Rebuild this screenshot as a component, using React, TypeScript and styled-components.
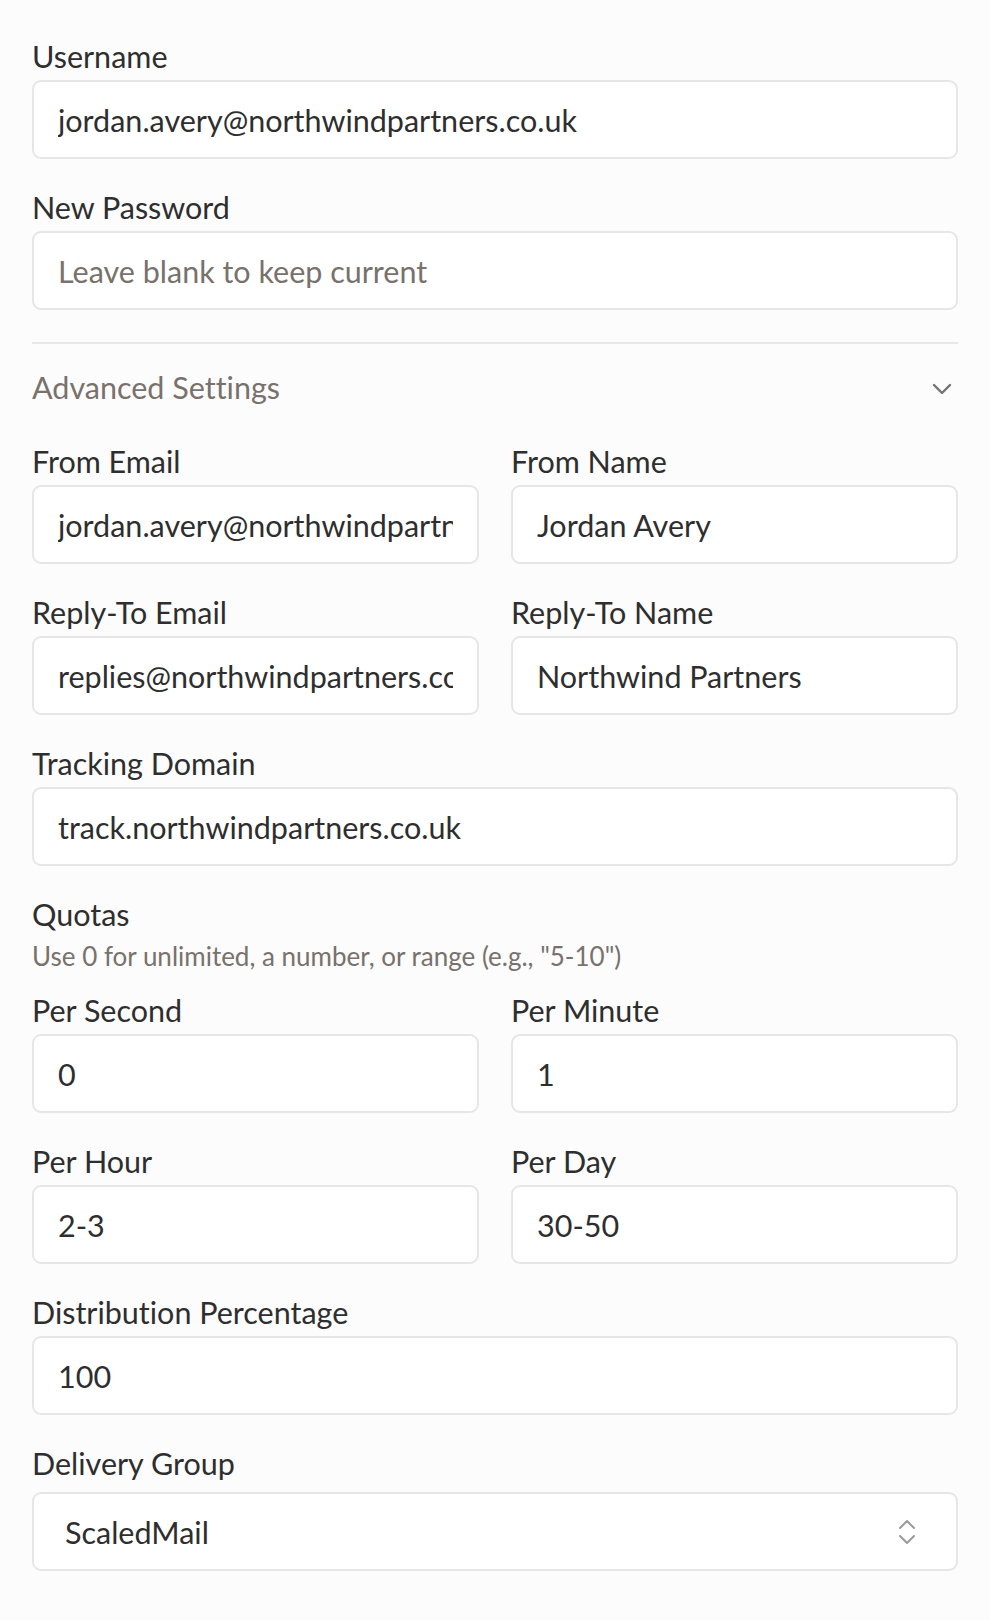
import React from 'react';
import styled, { createGlobalStyle } from 'styled-components';

const GlobalStyle = createGlobalStyle`
  html, body {
    margin: 0;
    padding: 0;
    background: #fcfcfc;
  }
  body {
    font-family: Lato, "Noto Sans", sans-serif;
    font-variant-ligatures: no-common-ligatures;
    color: #2e2e2e;
  }
  * { box-sizing: border-box; }
`;

const Form = styled.form`
  width: 990px;
  padding: 39px 32px 40px 32px;
  display: flex;
  flex-direction: column;
`;

const Field = styled.div`
  display: flex;
  flex-direction: column;
  margin-bottom: 31px;
`;

const Label = styled.label<{ $space?: number }>`
  font-size: 30.5px;
  line-height: 34px;
  color: #2e2e2e;
  margin-bottom: ${p => (p.$space ?? 7)}px;
`;

const Input = styled.input`
  width: 100%;
  height: 79px;
  padding: 0 24px;
  border: 2px solid #e6e6e6;
  border-radius: 9px;
  background: #fff;
  font-family: Lato, "Noto Sans", sans-serif;
  font-variant-ligatures: no-common-ligatures;
  font-size: 30.5px;
  color: #2e2e2e;
  outline: none;
  &::placeholder {
    color: #78716c;
  }
`;

const Divider = styled.hr`
  border: none;
  height: 2px;
  background: #e8e8e8;
  margin: 1px 0 0 0;
`;

const SectionHeader = styled.button`
  display: flex;
  align-items: center;
  justify-content: space-between;
  background: none;
  border: none;
  padding: 26px 6px 40px 0;
  font-family: Lato, "Noto Sans", sans-serif;
  font-variant-ligatures: no-common-ligatures;
  font-size: 30.5px;
  line-height: 34px;
  color: #78716c;
  cursor: pointer;
  text-align: left;
`;

const Row = styled.div`
  display: grid;
  grid-template-columns: 1fr 1fr;
  column-gap: 32px;
`;

const GroupTitle = styled.div`
  font-size: 30.5px;
  line-height: 34px;
  color: #2e2e2e;
`;

const Helper = styled.div`
  font-size: 26px;
  line-height: 30px;
  color: #78716c;
  margin: 10px 0 22px 0;
`;

const SelectBox = styled.div`
  position: relative;
  width: 100%;
  height: 79px;
  border: 2px solid #e6e6e6;
  border-radius: 9px;
  background: #fff;
`;

const Select = styled.select`
  appearance: none;
  width: 100%;
  height: 100%;
  border: none;
  background: transparent;
  padding: 0 60px 0 31px;
  font-family: Lato, "Noto Sans", sans-serif;
  font-size: 30.5px;
  color: #2e2e2e;
  outline: none;
`;

const SelectArrows = styled.span`
  position: absolute;
  right: 40px;
  top: 50%;
  transform: translateY(-50%);
  display: flex;
  pointer-events: none;
  color: #9a9a9a;
`;

const ChevronDown = () => (
  <svg width="20" height="12" viewBox="0 0 20 12" fill="none" stroke="currentColor" strokeWidth="2.4" strokeLinecap="round" strokeLinejoin="round" style={{ marginTop: 4 }}>
    <path d="M2 2 L10 10 L18 2" />
  </svg>
);

const UpDown = () => (
  <svg width="18" height="26" viewBox="0 0 18 26" fill="none" stroke="currentColor" strokeWidth="2" strokeLinecap="round" strokeLinejoin="round">
    <path d="M2 9 L9 2 L16 9" />
    <path d="M2 17 L9 24 L16 17" />
  </svg>
);

export default function App() {
  return (
    <>
      <GlobalStyle />
      <Form onSubmit={e => e.preventDefault()}>
        <Field>
          <Label>Username</Label>
          <Input defaultValue="jordan.avery@northwindpartners.co.uk" />
        </Field>
        <Field>
          <Label>New Password</Label>
          <Input type="password" placeholder="Leave blank to keep current" />
        </Field>

        <Divider />
        <SectionHeader type="button">
          Advanced Settings
          <ChevronDown />
        </SectionHeader>

        <Row>
          <Field>
            <Label>From Email</Label>
            <Input defaultValue="jordan.avery@northwindpartners.co.uk" />
          </Field>
          <Field>
            <Label>From Name</Label>
            <Input defaultValue="Jordan Avery" />
          </Field>
        </Row>
        <Row>
          <Field>
            <Label>Reply-To Email</Label>
            <Input defaultValue="replies@northwindpartners.co.uk" />
          </Field>
          <Field>
            <Label>Reply-To Name</Label>
            <Input defaultValue="Northwind Partners" />
          </Field>
        </Row>
        <Field>
          <Label>Tracking Domain</Label>
          <Input defaultValue="track.northwindpartners.co.uk" />
        </Field>

        <GroupTitle>Quotas</GroupTitle>
        <Helper>Use 0 for unlimited, a number, or range (e.g., "5-10")</Helper>
        <Row>
          <Field>
            <Label>Per Second</Label>
            <Input defaultValue="0" />
          </Field>
          <Field>
            <Label>Per Minute</Label>
            <Input defaultValue="1" />
          </Field>
        </Row>
        <Row>
          <Field>
            <Label>Per Hour</Label>
            <Input defaultValue="2-3" />
          </Field>
          <Field>
            <Label>Per Day</Label>
            <Input defaultValue="30-50" />
          </Field>
        </Row>
        <Field>
          <Label>Distribution Percentage</Label>
          <Input defaultValue="100" />
        </Field>
        <Field>
          <Label $space={12}>Delivery Group</Label>
          <SelectBox>
            <Select defaultValue="scaledmail">
              <option value="scaledmail">ScaledMail</option>
              <option value="default">Default</option>
            </Select>
            <SelectArrows>
              <UpDown />
            </SelectArrows>
          </SelectBox>
        </Field>
      </Form>
    </>
  );
}
